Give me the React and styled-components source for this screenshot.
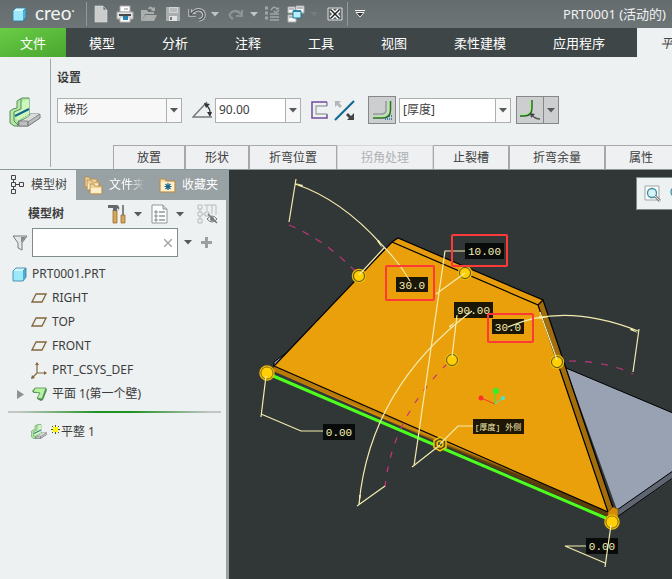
import React from "react";
import styled, { createGlobalStyle, css } from "styled-components";

const GlobalStyle = createGlobalStyle`
  * {
    box-sizing: border-box;
  }

  body {
    margin: 0;
    color: #3c3c3c;
    background: #edf1f2;
    overflow: hidden;
  }

  body, button, input, select {
    font-family: "Noto Sans", "Noto Sans CJK SC", sans-serif;
    font-size: 12px;
    line-height: 18px;
  }

  button {
    color: inherit;
    background: none;
    border: 0;
    padding: 0;
  }

  svg {
    display: block;
    flex: none;
  }
`;

const Window = styled.div`
  display: flex;
  flex-direction: column;
  min-height: 100vh;
`;

const TitleBar = styled.header`
  display: flex;
  align-items: center;
  height: 28px;
  background: linear-gradient(#656c6d, #6d7576);
  overflow: hidden;
`;

const Brand = styled.div`
  display: flex;
  align-items: center;
  gap: 8px;
  flex: none;
  width: 86px;
  padding-left: 12px;
`;

const BrandName = styled.span`
  padding-bottom: 3px;
  color: #f4f6f6;
  font-family: Lato, sans-serif;
  font-size: 19px;
  line-height: 24px;

  sup {
    font-size: 12px;
    line-height: 0;
    vertical-align: 5px;
  }
`;

const BarDivider = styled.span`
  flex: none;
  width: 1px;
  height: 24px;
  background: #939a9b;
`;

const QuickAccess = styled.div`
  display: flex;
  flex: none;
  padding-left: 2px;
`;

const ToolGroup = styled.div`
  display: flex;
  margin-right: 3px;
`;

const IconButton = styled.button`
  display: flex;
  align-items: center;
  justify-content: center;
  flex: none;
  width: ${(p) => (p.$narrow ? 12 : 24)}px;
  height: 24px;
`;

const WindowTitle = styled.h1`
  margin: 0 0 0 auto;
  padding-right: 6px;
  color: #f0f2f2;
  font-size: 13px;
  font-weight: 400;
  line-height: 20px;
  white-space: nowrap;
`;

const RibbonTabs = styled.nav`
  display: flex;
  gap: 1px;
  height: 29px;
  background: #3e4647;
  overflow: hidden;
`;

const RibbonTab = styled.button`
  flex: none;
  padding: 0 23px;
  color: #fff;
  font-size: 13px;
  white-space: nowrap;

  ${(p) =>
    p.$file &&
    css`
      padding: 0 20px;
      margin-right: -1px;
      background: linear-gradient(160deg, #69cd46, #4aa62f);
    `}

  ${(p) =>
    p.$active &&
    css`
      flex-grow: 1;
      margin-left: 8px;
      color: #444;
      font-style: italic;
      text-align: left;
      background: #edf1f2;
    `}
`;

const Ribbon = styled.section`
  display: flex;
  border-bottom: 1px solid #8b9798;
`;

const FeatureCell = styled.div`
  flex: none;
  width: 51px;
  margin: 2px 0;
  padding: 38px 0 0 9px;
  border-right: 1px solid #a3a9aa;
`;

const RibbonBody = styled.div`
  flex: 1;
  min-width: 0;
  padding: 12px 0 0 6px;
  overflow: hidden;
`;

const Heading = styled.h2`
  margin: 0;
  font-size: 12px;
  font-weight: 600;
  line-height: 18px;
`;

const Controls = styled.div`
  display: flex;
  align-items: center;
  height: 28px;
  margin: 9px 0 21px;
`;

const Combo = styled.div`
  display: flex;
  flex: none;
  width: ${(p) => p.$width}px;
  height: 25px;
  margin-right: ${(p) => p.$after || 0}px;
  background: ${(p) => (p.$soft ? "#f8f8f8" : "#fff")};
  border: 1px solid #acafb0;

  input, select {
    flex: 1;
    min-width: 0;
    padding: 0 3px;
    color: inherit;
    background: none;
    border: 0;
    outline: 0;
    appearance: none;
  }

  select {
    padding: 0 6px;
  }
`;

const ComboArrow = styled.button`
  display: flex;
  align-items: center;
  justify-content: center;
  width: 15px;
  background: #f8f8f8;
  border-left: 1px solid #acafb0;
`;

const Spot = styled.button`
  display: flex;
  margin-right: ${(p) => p.$after}px;
`;

const Pressed = styled.button`
  display: flex;
  align-items: center;
  justify-content: center;
  flex: none;
  width: ${(p) => (p.$arrow ? 15 : 28)}px;
  height: 28px;
  margin-right: ${(p) => p.$after || 0}px;
  background: #cccecf;
  border: 1px solid #858788;
  ${(p) => p.$arrow && "border-left: 0;"}
`;

const PanelTabs = styled.div`
  display: flex;
  margin-left: 56px;
`;

const PanelTab = styled.button`
  flex: none;
  height: 24px;
  padding: 0 ${(p) => (p.$wide ? 23 : 19)}px;
  border: 1px solid #a6a9aa;
  border-bottom: 0;
  white-space: nowrap;
  background: #eef0f2;

  &:disabled {
    color: #afb1b2;
    border-color: #d5d8d9;
  }
`;

const Workspace = styled.main`
  display: flex;
  flex: 1;
`;

const Sidebar = styled.aside`
  flex: none;
  width: 229px;
  border-right: 3px solid #98a1a3;
`;

const SideTabs = styled.div`
  display: flex;
  height: 30px;
  background: #98a1a3;
`;

const SideTab = styled.button`
  display: flex;
  align-items: center;
  gap: 6px;
  flex: ${(p) => (p.$active ? "0 0 76px" : "1 1 0")};
  padding-left: ${(p) => (p.$active ? 11 : 8)}px;
  color: ${(p) => (p.$active ? "#444" : "#fff")};
  background: ${(p) => (p.$active ? "#edf1f2" : "none")};
  overflow: hidden;
  white-space: nowrap;

  span {
    ${(p) => p.$fade && "mask-image: linear-gradient(90deg, #000 55%, transparent);"}
  }
`;

const SideHeader = styled.div`
  display: flex;
  align-items: center;
  gap: 3px;
  height: 28px;
  padding: 0 7px 0 28px;

  ${Heading} {
    margin-right: 38px;
  }

  > :last-child {
    margin-left: auto;
  }
`;

const SearchRow = styled.div`
  display: flex;
  align-items: center;
  padding-left: 12px;
`;

const SearchField = styled.div`
  display: flex;
  align-items: center;
  flex: none;
  width: 146px;
  height: 29px;
  margin: 0 4px;
  padding-right: 5px;
  background: #fff;
  border: 1px solid #7f8b8d;

  input {
    flex: 1;
    min-width: 0;
    border: 0;
    outline: 0;
    background: none;
  }
`;

const Tree = styled.ul`
  margin: 0;
  padding: 5px 0 0;
  list-style: none;
`;

const TreeRow = styled.li`
  display: flex;
  align-items: center;
  gap: 5px;
  height: 24px;
  padding-left: ${(p) => (p.$root ? 12 : 16)}px;
  white-space: nowrap;
`;

const Expander = styled.button`
  display: flex;
  justify-content: center;
  width: 10px;
`;

const NewItem = styled.span`
  display: flex;
  align-items: flex-start;

  svg {
    margin: 2px 1px 0 -1px;
  }
`;

const InsertLine = styled.hr`
  height: 2px;
  margin: 5px 5px 2px 8px;
  border: 0;
  background: linear-gradient(90deg, #c3c7c7 5%, #1f9221 42%, #1f9221 58%, #c3c7c7 95%);
`;

const Viewport = styled.section`
  position: relative;
  flex: 1;
  min-width: 0;
  background: #313737;
  overflow: hidden;
`;

const Scene = styled.svg`
  position: absolute;
  inset: 0;
  width: 100%;
  height: 100%;
`;

const ViewTools = styled.div`
  position: absolute;
  top: 7px;
  right: 0;
  display: flex;
  align-items: center;
  gap: 9px;
  width: 36px;
  height: 33px;
  padding-left: 7px;
  background: #edf1f2;
  border: 1px solid #7d898a;
  border-right: 0;
  overflow: hidden;
`;

const Caret = ({ color = "#555b5d" }) => (
  <svg width="8" height="5" viewBox="0 0 8 5">
    <path d="M0 0h8L4 4.5z" fill={color} />
  </svg>
);

const Cube = () => (
  <svg width="15" height="15" viewBox="0 0 15 15">
    <path d="M1 4 4 1h10v9l-3 4H1z" fill="#4eafd2" />
    <path d="M1 4h10v10H1z" fill="#9ce9fb" />
    <path d="M1 4 4 1h10l-3 3z" fill="#cff7ff" />
    <path d="M1 4 4 1h10v9l-3 4H1zM11 4l3-3" fill="none" stroke="#2a7fa5" strokeWidth=".8" />
  </svg>
);

const FlatWall = ({ size = 32 }) => (
  <svg width={size} height={size} viewBox="0 0 32 32">
    <path d="M10 24 21 17h9l1 4-12 8H8z" fill="#a6a8a9" stroke="#77797a" />
    <path d="m13 23 9-6h8l-9 8h-9z" fill="#dcdddd" />
    <path d="M1 14 4 12l4-1V4l5-3h7v18l-11 6v4H5l-4-3z" fill="#b5e8a8" stroke="#548d54" />
    <path d="M12 5 20 2v17l-11 5-3-4v-5l6-3z" fill="#cdf8bb" />
    <path d="M12 2v10l-7 3v9l5 5" fill="none" stroke="#548d54" />
    <path d="m6 19 14-7" stroke="#13678a" strokeWidth="2" />
    <path d="m9 24 12-7" stroke="#71a36a" strokeDasharray="1 1" />
    <path d="M10 24h9v5h-9zM19 25l12-8v4l-12 8z" fill="#bebfc0" stroke="#777" strokeWidth=".8" />
  </svg>
);

const PlaneIcon = () => (
  <svg width="16" height="12" viewBox="0 0 16 12">
    <path d="M5 2h10l-4 8H1z" fill="none" stroke="#83673a" strokeWidth="1.3" />
  </svg>
);

const CsysIcon = () => (
  <svg width="16" height="17" viewBox="0 0 16 17">
    <path d="M6 2v9h9M6 11l-5 5" fill="none" stroke="#83673a" strokeWidth="1.200" />
    <path d="m6 0 2 3H4zM16 11l-3 2V9zM0 17l1-4 3 3z" fill="#83673a" />
  </svg>
);

const WallIcon = () => (
  <svg width="16" height="16" viewBox="0 0 16 16">
    <path d="M4 2h11l1 2-4 10-2 1-4-2 3-6H3L1 5z" fill="#558b5d" />
    <path d="M4 2h11l-4 11-5-1 3-5-7-1z" fill="#b7f39e" stroke="#4f8a51" strokeWidth=".8" />
  </svg>
);

const StarIcon = () => (
  <svg width="9" height="9" viewBox="0 0 9 9">
    <path d="M4.500 0v9M0 4.500h9M1 1l7 7M8 1 1 8" stroke="#55530b" />
    <path d="M2 2h5v5H2z" fill="#fff20b" />
  </svg>
);

const folder = (x, y) => (
  <g>
    <path d={`M${x} ${y}h4l1 2h7v8h-12z`} fill="#efd095" stroke="#b2884a" strokeWidth=".8" />
    <path d={`M${x + 1} ${y + 4}h10v5h-10z`} fill="#fff0cd" />
  </g>
);

const QuickIcons = {
  fresh: <path d="M3 1h8l4 4v12H3zM11 1v4h4" fill="#cbcdcd" stroke="#ddd" strokeWidth=".6" />,
  print: (
    <g>
      <path d="M4 1h10v6H4z" fill="#fff" stroke="#aaa" />
      <path d="M1 7h16v7H1z" fill="#e5e5e5" stroke="#aaa" />
      <path d="M3 9h12v2H3z" fill="#454a4b" />
      <path d="M4 12h10v5H4z" fill="#fff" stroke="#bbb" />
      <path d="M7 11h5v4H7z" fill="#2784b0" />
      <path d="M8 4h4" stroke="#888" />
    </g>
  ),
  open: (
    <g fill="#aaaead">
      <path d="M1 5h6l1 2h6v2H5l-3 7H1z" />
      <path d="M5 10h12l-3 6H2z" />
      <path d="M8 3q3-3 5 0l2-1v4h-4l1-1q-2-2-4-1z" />
    </g>
  ),
  save: (
    <g>
      <path d="M2 2h14v14H2z" fill="#a9adad" />
      <path d="M5 2h9v6H5z" fill="#d2d5d5" />
      <path d="M5 11h8v5H5z" fill="#e2e4e4" />
      <path d="M6 12h2v3H6z" fill="#777" />
      <path d="M6 4h7M6 6h7" stroke="#9ea2a2" />
    </g>
  ),
  undo: (
    <g fill="none">
      <path d="M2 4v6h6M3 9q5-5 9-4t4 5-5 5" stroke="#c3c6c6" strokeWidth="3.500" />
      <path d="M2 4v6h6M3 9q5-5 9-4t4 5-5 5" stroke="#4f5556" strokeWidth="1.500" />
    </g>
  ),
  redo: <path d="M15 5v6H9M15 10Q10 4 5 7T6 14" fill="none" stroke="#8d9394" strokeWidth="2.200" />,
  regen: (
    <g fill="none" stroke="#a1a6a6" strokeWidth="2">
      <path d="M2 3h3M2 8h3M2 13h3" strokeWidth="3" />
      <path d="M7 9h9M7 12h9M7 15h9" strokeWidth="1.500" />
      <path d="M8 5q3-5 6-1l2-1M16 5q-3 4-5 1" strokeWidth="1.500" />
    </g>
  ),
  windows: (
    <g stroke="#a9acac">
      <path d="M1 2h7v6H1zM9 1h8v7H9zM1 10h8v7H1z" fill="#f8f8f8" />
      <path d="M2 4h5M10 3h6M2 12h6" stroke="#737b7d" />
      <path d="M6 6h8v7H6z" fill="#b8effb" stroke="#1a7598" />
      <path d="M6 6h8" stroke="#1a7598" strokeWidth="1.500" />
    </g>
  ),
  close: (
    <g>
      <path d="M2 3h14v12H2z" fill="#5d6465" stroke="#dcdede" />
      <path d="m5 5 8 8M13 5l-8 8" stroke="#fff" strokeWidth="4" />
      <path d="m5 5 8 8M13 5l-8 8" stroke="#202425" strokeWidth="1.500" />
    </g>
  ),
};

const Quick = ({ name, label }) => (
  <IconButton aria-label={label}>
    <svg width="18" height="18" viewBox="0 0 18 18">
      {QuickIcons[name]}
    </svg>
  </IconButton>
);

const MoreArrow = ({ label, color = "#c0c4c4" }) => (
  <IconButton $narrow aria-label={label}>
    <Caret color={color} />
  </IconButton>
);

const handles = [
  [359, 276, 5.5],
  [465, 273, 5.5],
  [452, 360, 5.5],
  [557, 362, 5.5],
  [267, 373, 6],
  [612, 522, 6],
];

const dimensions = [
  { text: "10.00", x: 465, y: 243, w: 39, h: 16 },
  { text: "30.0", x: 396, y: 277, w: 32, h: 15 },
  { text: "90.00", x: 454, y: 302, w: 39, h: 16 },
  { text: "30.0", x: 492, y: 319, w: 32, h: 15 },
  { text: "0.00", x: 323, y: 424, w: 32, h: 16 },
  { text: "0.00", x: 586, y: 538, w: 32, h: 16 },
];

const Model = () => (
  <Scene viewBox="229 170 443 409" preserveAspectRatio="xMinYMin slice" role="img" aria-label="PRT0001">
    <defs>
      <linearGradient id="bend" gradientUnits="userSpaceOnUse" x1="440" y1="438" x2="438" y2="443">
        <stop offset="0" stopColor="#b97a08" />
        <stop offset=".4" stopColor="#d48e0a" />
        <stop offset="1" stopColor="#5b3d09" />
      </linearGradient>
    </defs>

    {/* base plate */}
    <path d="M566 368 680 416V467L617 510z" fill="#98a2b3" />
    <path d="M617 510 680 466v8l-63 43z" fill="#5e6470" />
    <path d="M566 368 680 416M617 510l63-44M617 517l63-44M617 510v7" fill="none" stroke="#000" />

    {/* trapezoid wall */}
    <path d="m274 362 16-12-16 17z" fill="#98a2b3" stroke="#000" />
    <path d="m274 366 334 146v5L273 371z" fill="url(#bend)" />
    <path d="M274 366 392 242l146 63 70 207z" fill="#eaa00b" />
    <path d="m392 242 6-4 145 62-5 5z" fill="#e59b0b" />
    <path d="m538 305 5-5 70 208-5 4z" fill="#a26e0b" />
    <path d="M274 366 392 242l6-4 145 62 70 208M392 242l146 63 70 207M538 305l5-5M274 366l334 146" fill="none" stroke="#000" strokeWidth="1.200" />
    <path d="m608 512 5-5 5 2v8l-10 4z" fill="#d48b08" stroke="#60420a" strokeWidth=".6" />
    <path d="m271 375 337 144" stroke="#4fff1d" strokeWidth="3" />

    {/* swept ghosts */}
    <g fill="none" stroke="#c8347d" strokeWidth="1.200">
      <path d="M289 225Q325 240 355 271" strokeDasharray="7 8" />
      <path d="M385 487Q392 418 448 363" strokeDasharray="6 9" />
      <path d="M569 361Q606 361 633 374" strokeDasharray="7 9" />
    </g>

    {handles.map(([x, y, r]) => (
      <g key={`${x}-${y}`}>
        <circle cx={x} cy={y} r={r + 1} fill="none" stroke="#e9bb08" strokeWidth="1.500" />
        <circle cx={x} cy={y} r={r} fill="#ffd006" stroke={r > 5.5 ? "#a87d09" : "#5e5218"} />
      </g>
    ))}
    <path d="m440 437 6 3.500v7l-6 3.500-6-3.500v-7z" fill="#5b4b1c" stroke="#f4c60a" strokeWidth="1.500" />
    <circle cx="440" cy="444" r="3" fill="none" stroke="#f4c60a" strokeWidth="1.500" />

    {dimensions.map((d) => (
      <rect key={`${d.x}-${d.y}`} x={d.x} y={d.y} width={d.w} height={d.h} fill="#060705" fillOpacity=".9" />
    ))}
    <rect x="473" y="419" width="51" height="15" fill="#1f1705" />

    {/* dimension leaders */}
    <g fill="none" stroke="#f3ecae" strokeWidth="1.200">
      <path d="M295 184Q341 199 382 245 399 262 410 281M296 179l-7 43M359 275l25-27" />
      <path d="M465 251h-20l-31 215M412 467l28-22M465 273l-29 21" />
      <path d="M359 504C366 430 400 365 472 311M357 506l28-20M457 315l-5 42" />
      <path d="M508 327Q565 302 638 331M639 329l-6 43M540 312l17 48" />
      <path d="m266 376-5 41M261 414l40 17h22M440 444l18-18h15" />
      <path d="m611 525-6 42M586 546h-21l40 17" />
    </g>
    <path d="m295 183 8 2-1 2zM382 248l-5-7 2-1zM638 333l-8-3 1-2zM359 505l0-10 2 0zM455 322l-5 6-1-2zM548 317l-9 2v-3z" fill="#f3ecae" />

    <g fill="#f6f0b4" fontFamily="'Liberation Mono', monospace" fontSize="11" textAnchor="middle">
      {dimensions.map((d) => (
        <text key={`${d.x}-${d.y}`} x={d.x + d.w / 2} y={d.y + 12}>
          {d.text}
        </text>
      ))}
      <text x="498" y="430" fontFamily="'Liberation Mono', 'Noto Sans CJK SC', monospace" fontSize="8">
        [厚度] 外侧
      </text>
    </g>

    <g fill="none" stroke="#ff3838" strokeWidth="2">
      <rect x="452" y="235" width="55" height="31" rx="1" />
      <rect x="386" y="266" width="48" height="34" rx="1" />
      <rect x="488" y="314" width="45" height="28" rx="1" />
    </g>

    <path d="m495 404-14-6" stroke="#fb3329" />
    <path d="M495 404v-13" stroke="#2ff22f" />
    <path d="m495 404 8-6" stroke="#42e7da" />
    <circle cx="481" cy="398" r="2.500" fill="#fb3329" />
    <circle cx="496" cy="391" r="3" fill="#2ff22f" />
    <circle cx="503" cy="398" r="2" fill="#42e7da" />
  </Scene>
);

const Magnifier = () => (
  <svg width="17" height="17" viewBox="0 0 17 17">
    <path d="M1 1h14v14H1z" fill="#f9fafa" stroke="#a1a6a7" />
    <circle cx="8" cy="8" r="4.500" fill="#d7f3f8" stroke="#3d8ba1" strokeWidth="1.300" />
    <path d="m11 11 5 5" stroke="#888" strokeWidth="3" />
    <path d="m11 11 5 5" stroke="#ddd" />
  </svg>
);

const ZoomIn = () => (
  <svg width="17" height="17" viewBox="0 0 17 17">
    <circle cx="6" cy="7" r="5" fill="#d7f3f8" stroke="#3d8ba1" strokeWidth="1.300" />
    <path d="M6 4v6M3 7h6" stroke="#3d8ba1" />
    <path d="m10 11 5 5" stroke="#888" strokeWidth="3" />
  </svg>
);

const menu = ["模型", "分析", "注释", "工具", "视图", "柔性建模", "应用程序"];

const panels = [
  { name: "放置", wide: true },
  { name: "形状" },
  { name: "折弯位置" },
  { name: "拐角处理", wide: true, off: true },
  { name: "止裂槽" },
  { name: "折弯余量", wide: true },
  { name: "属性", wide: true },
];

const nodes = [
  { name: "RIGHT", icon: <PlaneIcon /> },
  { name: "TOP", icon: <PlaneIcon /> },
  { name: "FRONT", icon: <PlaneIcon /> },
  { name: "PRT_CSYS_DEF", icon: <CsysIcon /> },
  { name: "平面 1(第一个壁)", icon: <WallIcon />, open: true },
];

export default function App() {
  return (
    <Window>
      <GlobalStyle />
      <TitleBar>
        <Brand>
          <Cube />
          <BrandName>
            creo<sup>·</sup>
          </BrandName>
        </Brand>
        <BarDivider />
        <QuickAccess>
          <ToolGroup>
            <Quick name="fresh" label="新建" />
            <Quick name="print" label="打印" />
            <Quick name="open" label="打开" />
            <Quick name="save" label="保存" />
            <Quick name="undo" label="撤销" />
            <MoreArrow label="撤销列表" />
          </ToolGroup>
          <ToolGroup>
            <Quick name="redo" label="重做" />
            <MoreArrow label="重做列表" />
            <Quick name="regen" label="重新生成" />
            <Quick name="windows" label="窗口" />
            <MoreArrow label="窗口列表" color="#777b7b" />
          </ToolGroup>
          <Quick name="close" label="关闭" />
        </QuickAccess>
        <BarDivider />
        <IconButton aria-label="自定义">
          <svg width="10" height="8" viewBox="0 0 10 8">
            <path d="M0 .5h10" stroke="#f2f2f2" />
            <path d="M1 2.500h8L5 7z" fill="#333" stroke="#eee" />
          </svg>
        </IconButton>
        <WindowTitle>PRT0001 (活动的)</WindowTitle>
      </TitleBar>

      <RibbonTabs>
        <RibbonTab $file>文件</RibbonTab>
        {menu.map((name) => (
          <RibbonTab key={name}>{name}</RibbonTab>
        ))}
        <RibbonTab $active>平整</RibbonTab>
      </RibbonTabs>

      <Ribbon>
        <FeatureCell>
          <FlatWall />
        </FeatureCell>
        <RibbonBody>
          <Heading>设置</Heading>
          <Controls>
            <Combo $width={125} $after={10} $soft>
              <select aria-label="形状">
                <option>梯形</option>
              </select>
              <ComboArrow aria-label="展开形状">
                <Caret />
              </ComboArrow>
            </Combo>
            <Spot $after={3} aria-label="角度">
              <svg width="20" height="18" viewBox="0 0 20 18">
                <path d="M15 1 1 16h19" fill="none" stroke="#777a7b" strokeWidth="1.500" />
                <path d="M14 4q5 4 4 10" fill="none" stroke="#333" strokeWidth="1.300" />
                <path d="m12 2 6 1-4 4zM15 11h5l-2 5z" fill="#333" />
              </svg>
            </Spot>
            <Combo $width={86} $after={10}>
              <input aria-label="角度值" defaultValue="90.00" />
              <ComboArrow aria-label="展开角度">
                <Caret />
              </ComboArrow>
            </Combo>
            <Spot $after={6} aria-label="轮廓">
              <svg width="17" height="18" viewBox="0 0 17 18" fill="none">
                <path d="M16 1H1v16h15v-4" stroke="#72499b" strokeWidth="1.500" />
                <path d="M16 5H5v8h11" stroke="#a4a7a8" strokeWidth="1.300" />
                <path d="M16 1v4" stroke="#72499b" />
              </svg>
            </Spot>
            <Spot $after={13} aria-label="反向">
              <svg width="21" height="21" viewBox="0 0 21 21">
                <path d="M1 20 20 1" stroke="#126a92" strokeWidth="2.200" />
                <path d="M1 1h6L5 3l3 3-2 2-3-3-2 2z" fill="#b4b7b8" />
                <path d="M20 20h-7l2-2-3-3 2-2 3 3 3-3z" fill="#444" />
              </svg>
            </Spot>
            <Pressed $after={3} aria-label="内侧半径">
              <svg width="20" height="20" viewBox="0 0 20 20" fill="none">
                <path d="M14 1v9q0 4-5 4H1" stroke="#96999a" strokeWidth="1.500" />
                <path d="M17 1v9q0 7-7 7H1" stroke="#b3ec9e" strokeWidth="2.500" />
                <path d="M18.500 1v9q0 8-8 8H1" stroke="#356a30" strokeWidth="1.500" />
                <path d="M13 19h7M17 16h3" stroke="#126a92" strokeWidth="1.500" strokeDasharray="1 1" />
              </svg>
            </Pressed>
            <Combo $width={112} $after={5}>
              <input aria-label="半径" defaultValue="[厚度]" />
              <ComboArrow aria-label="展开半径">
                <Caret />
              </ComboArrow>
            </Combo>
            <Pressed aria-label="标注方式">
              <svg width="22" height="22" viewBox="0 0 22 22" fill="none">
                <path d="M12 1v8q0 7-7 7H1" stroke="#a5ee86" strokeWidth="2" />
                <path d="M13 1v8q0 8-8 8H1" stroke="#27642b" strokeWidth="1.400" />
                <path d="M13 16q3 4 8 4" stroke="#555" strokeWidth="1.300" />
                <path d="m11 14 5 1-4 4z" fill="#444" />
              </svg>
            </Pressed>
            <Pressed $arrow aria-label="标注方式列表">
              <Caret />
            </Pressed>
          </Controls>
          <PanelTabs>
            {panels.map((p) => (
              <PanelTab key={p.name} $wide={p.wide} disabled={p.off}>
                {p.name}
              </PanelTab>
            ))}
          </PanelTabs>
        </RibbonBody>
      </Ribbon>

      <Workspace>
        <Sidebar>
          <SideTabs>
            <SideTab $active>
              <svg width="14" height="20" viewBox="0 0 14 20" fill="none" stroke="#444">
                <path d="M.5.5h4v4h-4zM.5 7.500h4v4h-4zM8.500 7.500h4v4h-4zM.5 14.500h4v4h-4zM2.500 5v2M2.500 12v2M5 9.500h3" />
              </svg>
              <span>模型树</span>
            </SideTab>
            <SideTab $fade>
              <svg width="19" height="19" viewBox="0 0 19 19">
                {folder(1, 1)}
                {folder(3, 4)}
                {folder(6, 8)}
              </svg>
              <span>文件夹</span>
            </SideTab>
            <SideTab>
              <svg width="17" height="16" viewBox="0 0 17 16">
                <path d="M1 2h5l1 2h9v11H1z" fill="#f9dda6" stroke="#b68a4b" />
                <path d="M2 5h13v9H2z" fill="#fff0cf" />
                <path d="M9 6v7M5.500 9.500h7M6.500 7l5 5M11.500 7l-5 5" stroke="#17668b" strokeWidth="1.200" />
              </svg>
              <span>收藏夹</span>
            </SideTab>
          </SideTabs>
          <SideHeader>
            <Heading>模型树</Heading>
            <IconButton aria-label="设置">
              <svg width="18" height="20" viewBox="0 0 18 20">
                <path d="M5 6h4v13H5z" fill="#d8a756" stroke="#8c632c" strokeWidth=".7" />
                <path d="M0 1h9q3 1 2 5L9 4v3H5V4H0z" fill="#626a6d" />
                <path d="M14 1h2v10h-2z" fill="#7d8486" />
                <path d="M13 11h4v8h-4z" fill="#d8a756" stroke="#8c632c" strokeWidth=".7" />
              </svg>
            </IconButton>
            <MoreArrow label="设置列表" color="#555b5d" />
            <IconButton aria-label="显示">
              <svg width="17" height="20" viewBox="0 0 17 20">
                <path d="M1 1h11l4 4v14H1z" fill="#fcfdfd" stroke="#8d979b" />
                <path d="M12 1v4h4" fill="#c6d9e2" stroke="#8d979b" />
                <path d="M8 8h6M8 12h6M8 16h6" stroke="#5d6567" />
                <path d="M4 7h2v2H4zM4 11h2v2H4zM4 15h2v2H4z" fill="none" stroke="#5d6567" strokeWidth=".7" />
              </svg>
            </IconButton>
            <MoreArrow label="显示列表" color="#555b5d" />
            <IconButton aria-label="隐藏">
              <svg width="21" height="20" viewBox="0 0 21 20" fill="none" stroke="#b7bbbc">
                <path d="M1 1h4v4H1zM1 8h4v4H1zM1 15h4v4H1zM3 5v3M3 12v3M5 10h3M8 8h4v4H8zM7 1h12v10M10 1v6M15 1v9" />
                <path d="M10 15q5-6 10 0-5 6-10 0z" stroke="#777" />
                <circle cx="15" cy="15" r="2" fill="#777" stroke="none" />
                <path d="m11 10 9 9" stroke="#777" strokeWidth="1.500" />
              </svg>
            </IconButton>
          </SideHeader>
          <SearchRow>
            <svg width="16" height="16" viewBox="0 0 16 16">
              <path d="M1 1h14l-5 7v7l-4-2V8z" fill="#e4e6e7" stroke="#777c7e" />
              <path d="M9 2h5L9 8v6z" fill="#858b8d" />
            </svg>
            <SearchField>
              <input aria-label="搜索" />
              <button aria-label="清除">
                <svg width="8" height="8" viewBox="0 0 8 8">
                  <path d="m0 0 8 8M8 0 0 8" stroke="#a1a5a6" strokeWidth="1.400" />
                </svg>
              </button>
            </SearchField>
            <MoreArrow label="搜索列表" color="#555b5d" />
            <IconButton aria-label="添加">
              <svg width="11" height="11" viewBox="0 0 11 11">
                <path d="M5.500 0v11M0 5.500h11" stroke="#9b9fa0" strokeWidth="3" />
              </svg>
            </IconButton>
          </SearchRow>
          <Tree>
            <TreeRow $root>
              <Cube />
              PRT0001.PRT
            </TreeRow>
            {nodes.map((n) => (
              <TreeRow key={n.name}>
                <Expander aria-label={n.name}>
                  {n.open && (
                    <svg width="8" height="9" viewBox="0 0 8 9">
                      <path d="M0 0v9l7-4.500z" fill="#8e9192" />
                    </svg>
                  )}
                </Expander>
                {n.icon}
                {n.name}
              </TreeRow>
            ))}
          </Tree>
          <InsertLine />
          <Tree>
            <TreeRow>
              <Expander aria-label="平整 1" />
              <FlatWall size={16} />
              <NewItem>
                <StarIcon />
                平整 1
              </NewItem>
            </TreeRow>
          </Tree>
        </Sidebar>
        <Viewport>
          <Model />
          <ViewTools>
            <Magnifier />
            <ZoomIn />
          </ViewTools>
        </Viewport>
      </Workspace>
    </Window>
  );
}
